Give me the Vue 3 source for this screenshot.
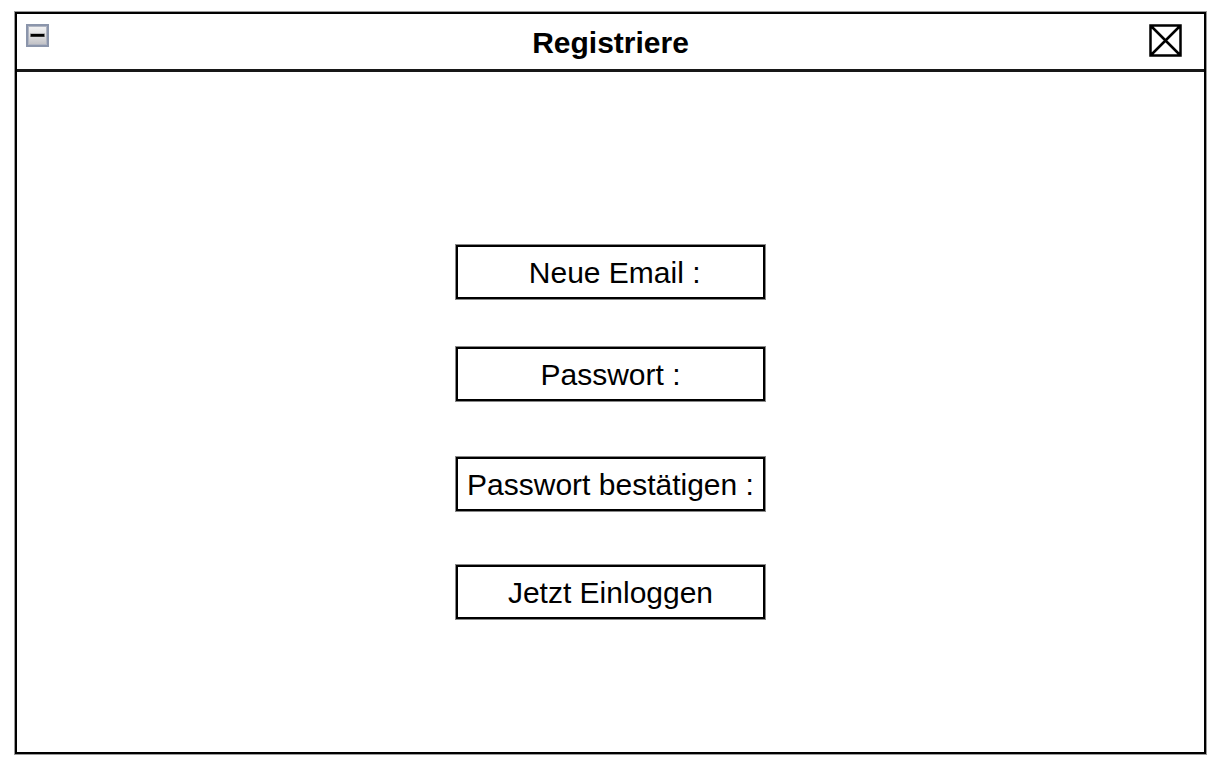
<script setup>
import { reactive } from 'vue'

const fields = [
  { id: 'email', type: 'email', name: 'Neue Email', text: '\u00a0Neue Email :' },
  { id: 'password', type: 'password', name: 'Passwort', text: 'Passwort :' },
  { id: 'confirm', type: 'password', name: 'Passwort bestätigen', text: 'Passwort bestätigen :' }
]
const form = reactive({ email: '', password: '', confirm: '' })
</script>

<template>
  <div class="page">
    <main class="window">
      <header class="titlebar">
        <button class="icon minimize" type="button" aria-label="Minimieren">
          <svg width="23" height="23" viewBox="0 0 23 23" aria-hidden="true">
            <defs>
              <linearGradient id="face" x1="0" y1="0" x2="0" y2="1">
                <stop offset="0" stop-color="#f1f1f2" />
                <stop offset="0.5" stop-color="#dedee0" />
                <stop offset="1" stop-color="#c3c3c7" />
              </linearGradient>
            </defs>
            <rect width="23" height="23" fill="#8b95ab" />
            <rect x="2" y="2" width="19" height="19" fill="#b0b5c2" />
            <rect x="3" y="3" width="17" height="17" fill="url(#face)" />
            <rect x="4" y="9.6" width="15" height="3.4" fill="#777" />
            <rect x="5" y="10" width="13" height="2.6" fill="#000" />
          </svg>
        </button>
        <h1 class="title">Registriere</h1>
        <button class="icon close" type="button" aria-label="Schließen">
          <svg width="33" height="33" viewBox="0 0 33 33" aria-hidden="true">
            <path
              d="M1.5 1.5H31.5V31.5H1.5ZM1.5 1.5L31.5 31.5M31.5 1.5L1.5 31.5"
              fill="none"
              stroke="#000"
              stroke-width="2.5"
            />
          </svg>
        </button>
      </header>

      <form class="form" @submit.prevent>
        <input
          v-for="field in fields"
          :key="field.id"
          v-model="form[field.id]"
          class="box"
          :class="field.id"
          :type="field.type"
          :aria-label="field.name"
          :placeholder="field.text"
        />
        <button class="box submit" type="submit">Jetzt Einloggen</button>
      </form>
    </main>
  </div>
</template>

<style>
body {
  margin: 0;
  background: #fff;
}
</style>

<style scoped>
.page {
  box-sizing: border-box;
  display: flex;
  min-height: 100vh;
  padding: 12px 24px 13px 15px;
  background: #fff;
  color: #000;
  font-family: "Liberation Sans", Arial, sans-serif;
}

.window {
  flex: 1;
  display: flex;
  flex-direction: column;
  border: 2px solid #000;
  box-shadow: 0 0 0 1px #999;
}

.titlebar {
  display: grid;
  grid-template-columns: 1fr auto 1fr;
  align-items: start;
  padding: 10px 9px 7px;
  border-bottom: 3px solid #181818;
}

.icon {
  display: block;
  padding: 0;
  border: 0;
  background: none;
  cursor: pointer;
}

.icon svg {
  display: block;
}

.minimize {
  justify-self: start;
}

.close {
  justify-self: end;
  margin-right: 13px;
}

.title {
  margin: 0;
  font-size: 30px;
  line-height: 38px;
  font-weight: 700;
}

.form {
  display: flex;
  flex-direction: column;
  align-items: center;
  padding: 173px 16px 48px;
}

.box {
  box-sizing: border-box;
  width: 309px;
  max-width: 100%;
  height: 54px;
  padding: 2px 0 0;
  border: 2px solid #000;
  border-radius: 0;
  box-shadow: 0 0 0 1px #888;
  background: #fff;
  color: #000;
  font-family: inherit;
  font-size: 30px;
  line-height: 36px;
  text-align: center;
}

.box::placeholder {
  color: #000;
  opacity: 1;
}

.password {
  margin-top: 48px;
}

.confirm {
  margin-top: 56px;
}

.submit {
  margin-top: 54px;
  cursor: pointer;
}
</style>
